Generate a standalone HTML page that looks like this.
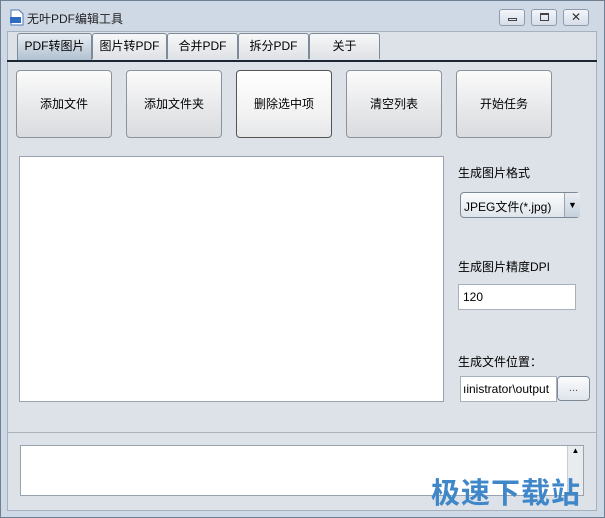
<!DOCTYPE html>
<html><head><meta charset="utf-8"><style>
*{box-sizing:border-box;margin:0;padding:0}
body{width:605px;height:518px;overflow:hidden;background:#fff;font-family:"Liberation Sans","Noto Sans CJK SC",sans-serif;font-size:12px;color:#000}
.win{position:absolute;left:0;top:0;width:605px;height:518px;background:#cfd9e6;border:1px solid #6f7f92}
.client{position:absolute;left:7px;top:31px;width:590px;height:480px;background:#dde2e8;border:1px solid #a6b1bf}
.abs{position:absolute}
.tb{position:absolute;top:9px;width:26px;height:17px;border:1px solid #8d9aab;border-radius:3px;background:linear-gradient(#f3f6fa,#d6dee8)}
.tab{position:absolute;top:33px;height:26px;border:1px solid #7d8a99;border-bottom:none;border-radius:3px 3px 0 0;background:linear-gradient(#f6f7f8,#dfe2e6);text-align:center;line-height:25px;font-size:12px}
.btn{position:absolute;top:70px;width:96px;height:68px;border:1px solid #8d939a;border-radius:4px;background:linear-gradient(#fbfbfb,#e6e7e9 60%,#d9dbde);text-align:center;line-height:66px;font-size:12px}
.lbl{position:absolute;left:458px;font-size:12px}
</style></head><body>
<div class="win"></div>
<div class="client"></div>
<svg class="abs" style="left:9px;top:9px" width="16" height="17"><path d="M2 1h8l4 4v11H2z" fill="#fff" stroke="#4a7ab8"/><rect x="1" y="8" width="11" height="6" fill="#2f6cc0"/></svg>
<div class="abs" style="left:27px;top:10px;font-size:12px;color:#222">无叶PDF编辑工具</div>
<div class="tb" style="left:499px"><div class="abs" style="left:8px;top:8px;width:9px;height:3px;border:1px solid #444"></div></div>
<div class="tb" style="left:531px"><div class="abs" style="left:8px;top:3px;width:9px;height:8px;border:1px solid #444;border-top-width:2px"></div></div>
<div class="tb" style="left:563px;text-align:center;line-height:14px;font-size:12px;color:#333">✕</div>
<div class="tab" style="left:17px;width:75px;background:linear-gradient(#e8edf2,#aebfd0);height:28px">PDF转图片</div>
<div class="tab" style="left:92px;width:75px">图片转PDF</div>
<div class="tab" style="left:167px;width:71px">合并PDF</div>
<div class="tab" style="left:238px;width:71px">拆分PDF</div>
<div class="tab" style="left:309px;width:71px">关于</div>
<div class="abs" style="left:7px;top:60px;width:590px;height:2px;background:#1d2633"></div>
<div class="btn" style="left:16px">添加文件</div>
<div class="btn" style="left:126px">添加文件夹</div>
<div class="btn" style="left:236px;background:linear-gradient(#fff,#f3f3f4 60%,#e6e7e9);border-color:#555">删除选中项</div>
<div class="btn" style="left:346px">清空列表</div>
<div class="btn" style="left:456px">开始任务</div>
<div class="abs" style="left:19px;top:156px;width:425px;height:246px;background:#fff;border:1px solid #9aa3ad"></div>
<div class="lbl" style="top:164px">生成图片格式</div>
<div class="abs" style="left:460px;top:192px;width:120px;height:26px;border:1px solid #7e8996;border-radius:4px;background:linear-gradient(#fbfcfd,#dfe5ec)"><span class="abs" style="left:3px;top:5px;font-size:12px;white-space:nowrap">JPEG文件(*.jpg)</span><div class="abs" style="left:103px;top:0;width:16px;height:24px;border-left:1px solid #9aa3ad;background:linear-gradient(#e9eef3,#c6d0dc);text-align:center;line-height:24px;font-size:9px">▼</div></div>
<div class="lbl" style="top:258px">生成图片精度DPI</div>
<div class="abs" style="left:458px;top:284px;width:118px;height:26px;background:#fff;border:1px solid #a8b0ba;padding:5px 4px;font-size:12px">120</div>
<div class="lbl" style="top:353px">生成文件位置：</div>
<div class="abs" style="left:460px;top:376px;width:97px;height:26px;background:#fff;border:1px solid #a8b0ba;padding:5px 2px;font-size:12px;overflow:hidden;white-space:nowrap">ıinistrator\output</div>
<div class="abs" style="left:557px;top:376px;width:33px;height:25px;border:1px solid #7e8996;border-radius:4px;background:linear-gradient(#fbfcfd,#dfe5ec);text-align:center;line-height:22px;font-size:11px;color:#555">...</div>
<div class="abs" style="left:8px;top:432px;width:588px;height:1px;background:#aab3be"></div>
<div class="abs" style="left:20px;top:445px;width:564px;height:51px;background:#fff;border:1px solid #9aa3ad"></div>
<div class="abs" style="left:567px;top:446px;width:16px;height:49px;background:#e9ecef;border-left:1px solid #c8cdd3;text-align:center;font-size:8px">▲</div>
<div class="abs" style="left:431px;top:470px;font-size:29px;font-weight:bold;color:#3f87c8;letter-spacing:1px;font-family:'Noto Sans CJK SC',sans-serif">极速下载站</div>
</body></html>
